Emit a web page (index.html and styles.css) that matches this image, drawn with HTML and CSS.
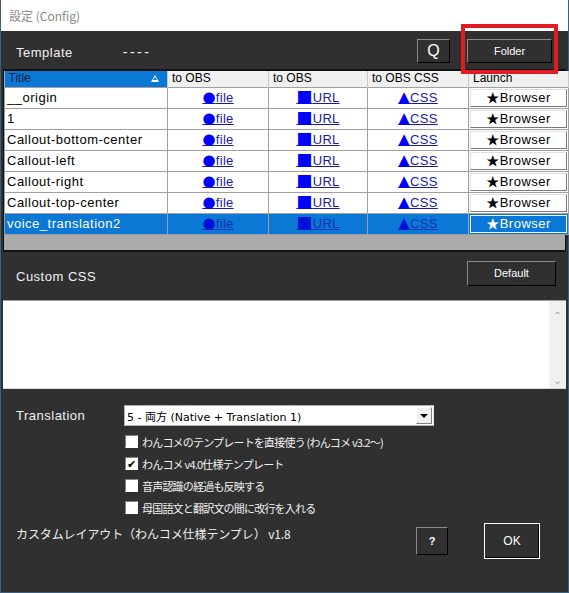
FILE: index.html
```html
<!DOCTYPE html>
<html lang="ja">
<head>
    <meta charset="UTF-8">
    <meta name="viewport" content="width=device-width, initial-scale=1.0">
    <title>設定 (Config)</title>
    <link rel="stylesheet" href="styles.css">
</head>
<body>
    <div class="window">
        <div class="titlebar">設定 (Config)</div>
        <div class="client">
            <div class="template-row">
                <span class="label template-label">Template</span>
                <span class="label template-name">----</span>
                <span class="spacer"></span>
                <button class="btn btn-q">Q</button>
                <div class="highlight">
                    <button class="btn btn-folder">Folder</button>
                </div>
            </div>

            <div class="grid">
                <table class="grid-table">
                    <colgroup>
                        <col class="col-title">
                        <col class="col-link">
                        <col class="col-link2">
                        <col class="col-link">
                        <col class="col-launch">
                    </colgroup>
                    <thead>
                        <tr>
                            <th class="sorted">Title<span class="sort-mark"></span></th>
                            <th>to OBS</th>
                            <th>to OBS</th>
                            <th>to OBS CSS</th>
                            <th>Launch</th>
                        </tr>
                    </thead>
                    <tbody>
                        <tr>
                            <td class="name">__origin</td>
                            <td class="link"><a><span class="glyph">●</span>file</a></td>
                            <td class="link"><a><span class="glyph sq">■</span>URL</a></td>
                            <td class="link"><a><span class="glyph">▲</span>CSS</a></td>
                            <td class="launch"><span class="launch-btn">★Browser</span></td>
                        </tr>
                        <tr>
                            <td class="name">1</td>
                            <td class="link"><a><span class="glyph">●</span>file</a></td>
                            <td class="link"><a><span class="glyph sq">■</span>URL</a></td>
                            <td class="link"><a><span class="glyph">▲</span>CSS</a></td>
                            <td class="launch"><span class="launch-btn">★Browser</span></td>
                        </tr>
                        <tr>
                            <td class="name">Callout-bottom-center</td>
                            <td class="link"><a><span class="glyph">●</span>file</a></td>
                            <td class="link"><a><span class="glyph sq">■</span>URL</a></td>
                            <td class="link"><a><span class="glyph">▲</span>CSS</a></td>
                            <td class="launch"><span class="launch-btn">★Browser</span></td>
                        </tr>
                        <tr>
                            <td class="name">Callout-left</td>
                            <td class="link"><a><span class="glyph">●</span>file</a></td>
                            <td class="link"><a><span class="glyph sq">■</span>URL</a></td>
                            <td class="link"><a><span class="glyph">▲</span>CSS</a></td>
                            <td class="launch"><span class="launch-btn">★Browser</span></td>
                        </tr>
                        <tr>
                            <td class="name">Callout-right</td>
                            <td class="link"><a><span class="glyph">●</span>file</a></td>
                            <td class="link"><a><span class="glyph sq">■</span>URL</a></td>
                            <td class="link"><a><span class="glyph">▲</span>CSS</a></td>
                            <td class="launch"><span class="launch-btn">★Browser</span></td>
                        </tr>
                        <tr>
                            <td class="name">Callout-top-center</td>
                            <td class="link"><a><span class="glyph">●</span>file</a></td>
                            <td class="link"><a><span class="glyph sq">■</span>URL</a></td>
                            <td class="link"><a><span class="glyph">▲</span>CSS</a></td>
                            <td class="launch"><span class="launch-btn">★Browser</span></td>
                        </tr>
                        <tr class="selected">
                            <td class="name">voice_translation2</td>
                            <td class="link"><a><span class="glyph">●</span>file</a></td>
                            <td class="link"><a><span class="glyph sq">■</span>URL</a></td>
                            <td class="link"><a><span class="glyph">▲</span>CSS</a></td>
                            <td class="launch"><span class="launch-btn">★Browser</span></td>
                        </tr>
                    </tbody>
                </table>
            </div>

            <div class="css-row">
                <span class="label">Custom CSS</span>
                <button class="btn btn-default">Default</button>
            </div>

            <div class="css-box">
                <div class="css-text"></div>
                <div class="scrollbar">
                    <span class="arrow">&#8963;</span>
                    <span class="arrow">&#8964;</span>
                </div>
            </div>

            <div class="options">
                <div class="translation-row">
                    <span class="label translation-label">Translation</span>
                    <div class="select">
                        <span class="select-text">5 - 両方 (Native + Translation 1)</span>
                        <span class="select-btn"><span class="down"></span></span>
                    </div>
                </div>
                <div class="checks">
                    <label class="check"><span class="box"></span>わんコメのテンプレートを直接使う (わんコメ v3.2～)</label>
                    <label class="check"><span class="box checked">✔</span>わんコメ v4.0仕様テンプレート</label>
                    <label class="check"><span class="box"></span>音声認識の経過も反映する</label>
                    <label class="check"><span class="box"></span>母国語文と翻訳文の間に改行を入れる</label>
                </div>
            </div>

            <div class="footer">
                <span class="label version">カスタムレイアウト（わんコメ仕様テンプレ） v1.8</span>
                <span class="spacer"></span>
                <button class="btn btn-help">?</button>
                <button class="btn btn-ok">OK</button>
            </div>
        </div>
    </div>
</body>
</html>
```

FILE: styles.css
```css
* {
    box-sizing: border-box;
}

body {
    margin: 0;
    background: #2b4a66;
    font-family: "Noto Sans CJK JP", "DejaVu Sans", sans-serif;
    font-size: 12px;
}

.window {
    width: 569px;
    height: 593px;
    display: flex;
    flex-direction: column;
    border: 1px solid #3c5d7c;
    border-top: none;
}

.titlebar {
    height: 31px;
    background: #fff;
    color: #8a8a8a;
    font-size: 12px;
    line-height: 31px;
    padding-left: 8px;
}

.client {
    flex: 1;
    background: #303030;
    display: flex;
    flex-direction: column;
    padding: 0 1px;
}

.label {
    color: #f0f0f0;
    font-family: "Liberation Sans", "Noto Sans CJK JP", sans-serif;
    font-size: 13px;
    letter-spacing: 0.5px;
}

.spacer {
    flex: 1;
}

.btn {
    background: #303030;
    color: #fff;
    font-family: "Liberation Sans", sans-serif;
    font-size: 11px;
    border: 1px solid;
    border-color: #8a8a8a #000 #000 #8a8a8a;
    padding: 0;
}

/* top row */
.template-row {
    height: 38px;
    display: flex;
    align-items: center;
    padding: 0 15px 0 14px;
    position: relative;
}

.template-label {
    margin-top: 5px;
}

.template-name {
    margin-left: 50px;
    margin-top: 3px;
    letter-spacing: 2.5px;
    font-size: 14px;
}

.btn-q {
    width: 33px;
    height: 24px;
    font-size: 16px;
    margin-right: 17px;
    margin-top: 1px;
}

.btn-folder {
    width: 85px;
    height: 24px;
    display: block;
}

.highlight {
    position: relative;
    margin-top: 1px;
}

.highlight::after {
    content: "";
    position: absolute;
    left: -6px;
    top: -15px;
    right: -6px;
    bottom: -11px;
    border: 4px solid #e01b24;
}

/* template list */
.grid {
    height: 183px;
    margin: 0 1px;
    background: #ababab;
    border: 1px solid #111;
    border-top-width: 2px;
    border-bottom-width: 2px;
}

.grid-table {
    border-collapse: collapse;
    table-layout: fixed;
    width: 563px;
    font-family: "Liberation Sans", "Noto Sans CJK JP", sans-serif;
    font-size: 12px;
}

.col-title { width: 163px; }
.col-link { width: 101px; }
.col-link2 { width: 99px; }
.col-launch { width: 100px; }

.grid-table th {
    height: 16px;
    background: #f0f0f0;
    font-weight: normal;
    text-align: left;
    padding: 0 0 0 4px;
    border-right: 1px solid #c8c8c8;
    color: #000;
    font-size: 12px;
    line-height: 15px;
}

.grid-table th.sorted {
    background: #0a78d4;
    color: #102040;
    position: relative;
}

.sort-mark {
    position: absolute;
    right: 8px;
    top: 4px;
    width: 0;
    height: 0;
    border-left: 4px solid transparent;
    border-right: 4px solid transparent;
    border-bottom: 7px solid #fff;
}

.sort-mark::after {
    content: "";
    position: absolute;
    left: -2px;
    top: 2px;
    border-left: 2px solid transparent;
    border-right: 2px solid transparent;
    border-bottom: 3px solid #0a78d4;
}

.grid-table td {
    height: 20px;
    background: #fff;
    border: 1px solid #a0a0a0;
    padding: 0;
    white-space: nowrap;
    overflow: hidden;
}

.grid-table td.name {
    padding-left: 2px;
    font-size: 13px;
    letter-spacing: 0.5px;
    color: #000;
}

.grid-table td.link {
    text-align: center;
}

.link a {
    color: #1a1aa6;
    text-decoration: underline;
    font-size: 13px;
    letter-spacing: 0.3px;
}

.glyph {
    color: #0000ff;
    font-family: "DejaVu Sans", sans-serif;
    font-size: 15px;
    line-height: 10px;
}

.glyph.sq {
    font-size: 17px;
}

.launch {
    padding: 1px !important;
}

.launch-btn {
    display: block;
    height: 18px;
    line-height: 16px;
    text-align: center;
    border: 1px solid;
    border-color: #e0e0e0 #7a7a7a #7a7a7a #e0e0e0;
    background: #fff;
    color: #000;
    font-size: 13px;
    letter-spacing: 0.5px;
}

.selected td {
    background: #0a78d4;
}

.selected td.name {
    color: #fff;
}

.selected .link a {
    color: #0b2fb0;
}

.selected .glyph {
    color: #0010d8;
}

.selected .launch-btn {
    background: #0a78d4;
    color: #fff;
    border-color: #fff;
}

/* custom css */
.css-row {
    height: 48px;
    display: flex;
    align-items: center;
    padding: 0 11px 0 14px;
    justify-content: space-between;
}

.btn-default {
    width: 89px;
    height: 25px;
    margin-top: -6px;
}

.css-box {
    height: 89px;
    margin: 0 1px;
    display: flex;
    background: #fff;
    border-top: 1px solid #a0a0a0;
    border-bottom: 1px solid #d8d8d8;
}

.css-text {
    flex: 1;
}

.scrollbar {
    width: 17px;
    background: #f0f0f0;
    display: flex;
    flex-direction: column;
    justify-content: space-between;
    align-items: center;
    color: #a0a0a0;
    font-size: 10px;
    padding: 6px 0 1px;
}

/* translation options */
.options {
    padding: 16px 0 0 14px;
}

.translation-row {
    display: flex;
    align-items: center;
    height: 21px;
}

.translation-label {
    width: 108px;
}

.select {
    width: 310px;
    height: 21px;
    background: #fff;
    border: 1px solid #b0b0b0;
    border-right-color: #e8e8e8;
    display: flex;
    align-items: center;
    padding: 1px 1px 1px 2px;
}

.select-text {
    flex: 1;
    font-family: "DejaVu Sans", "Noto Sans CJK JP", sans-serif;
    font-size: 11px;
    color: #000;
}

.select-btn {
    width: 16px;
    height: 17px;
    background: #f0f0f0;
    border: 1px solid;
    border-color: #fff #808080 #808080 #fff;
    display: flex;
    align-items: center;
    justify-content: center;
}

.down {
    border-left: 4px solid transparent;
    border-right: 4px solid transparent;
    border-top: 4px solid #000;
}

.checks {
    display: flex;
    flex-direction: column;
    gap: 9px;
    margin: 9px 0 0 109px;
}

.check {
    display: flex;
    align-items: center;
    gap: 4px;
    color: #f0f0f0;
    font-size: 11px;
    letter-spacing: -0.8px;
    height: 13px;
}

.box {
    width: 13px;
    height: 13px;
    background: #fff;
    border: 1px solid #808080;
    border-color: #808080 #fff #fff #808080;
    color: #000;
    font-size: 11px;
    line-height: 11px;
    letter-spacing: 0;
    text-align: center;
    font-weight: bold;
}

/* footer */
.footer {
    display: flex;
    align-items: flex-start;
    padding: 7px 27px 0 14px;
}

.version {
    font-family: "Noto Sans CJK JP", sans-serif;
    font-size: 12px;
    letter-spacing: -0.1px;
    margin-top: 4px;
}

.btn-help {
    width: 32px;
    height: 28px;
    margin-top: 6px;
    margin-right: 36px;
    font-size: 11px;
    font-weight: bold;
}

.btn-ok {
    width: 56px;
    height: 36px;
    margin-top: 2px;
    border: 1px solid #fff;
    box-shadow: inset -1px -1px 0 #000;
    font-size: 12px;
}
```
